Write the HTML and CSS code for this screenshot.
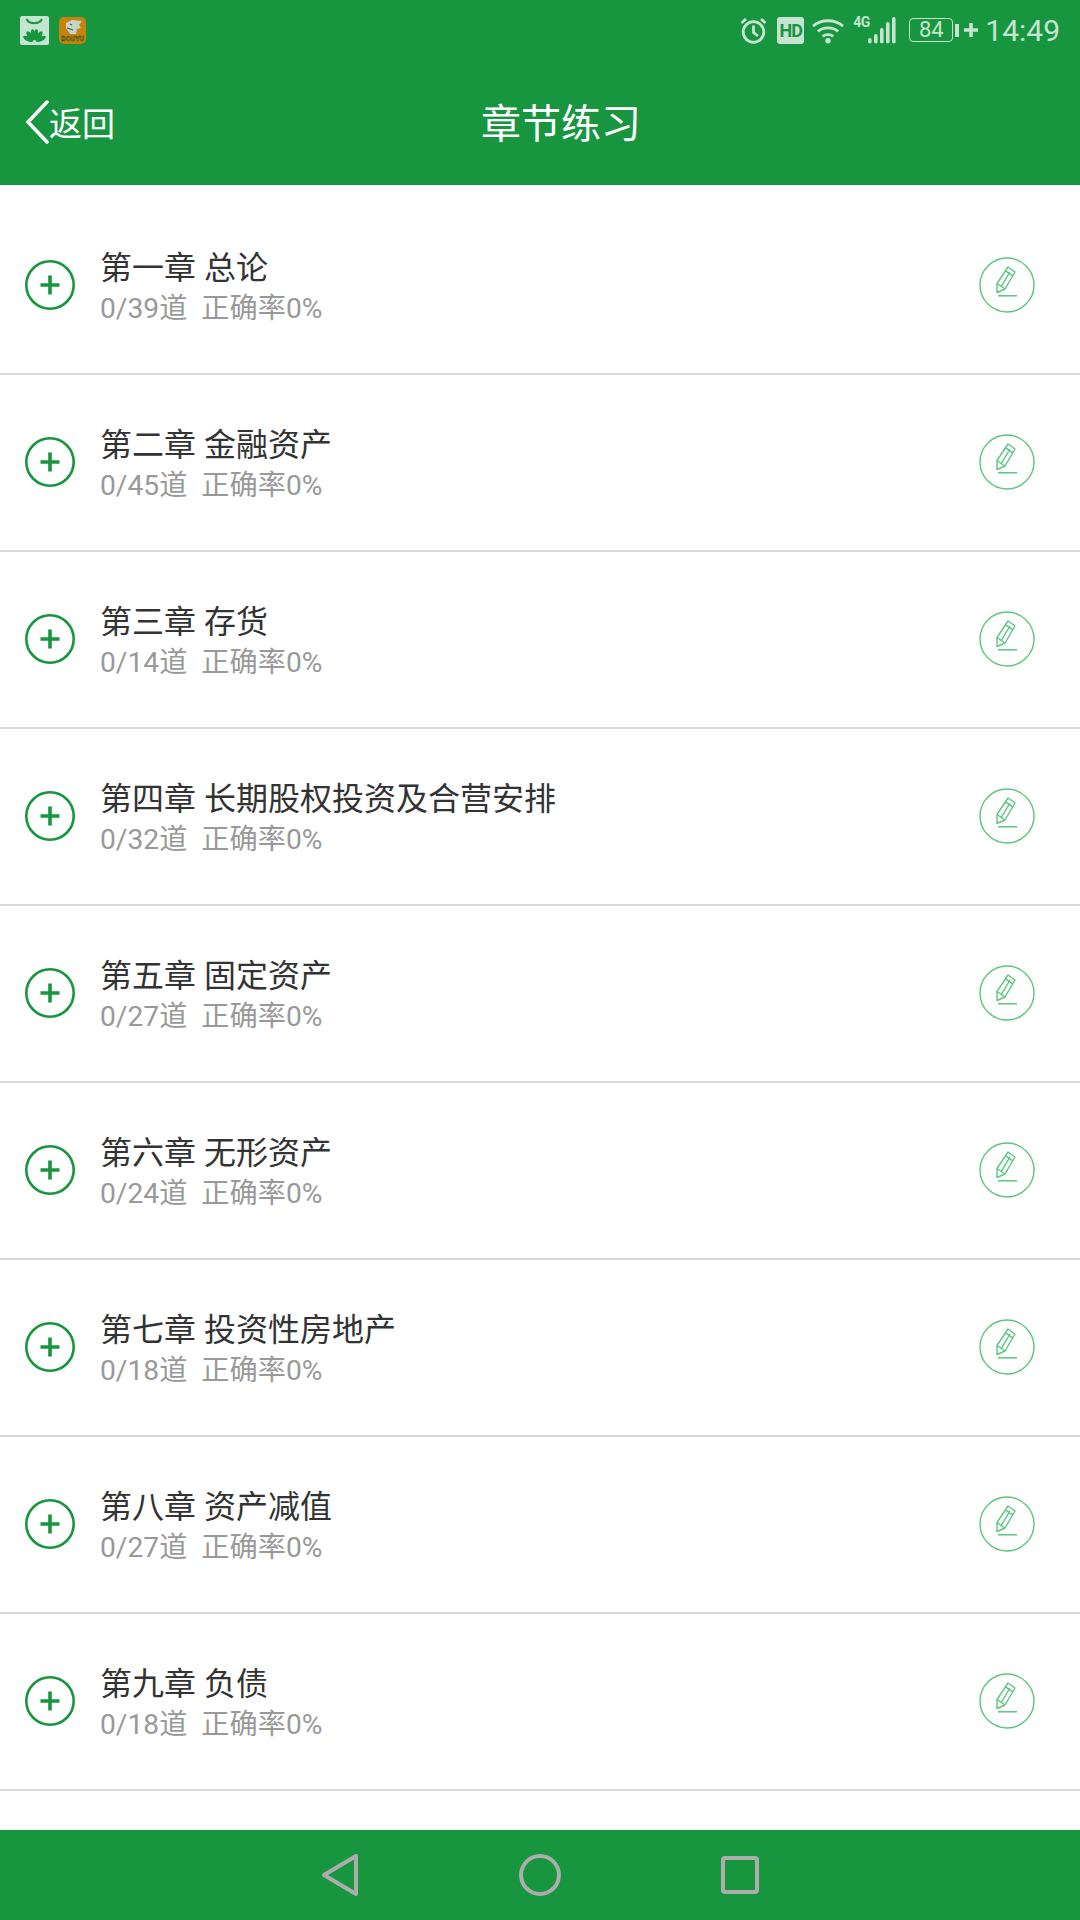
FILE: index.html
```html
<!DOCTYPE html>
<html lang="zh-CN">
<head>
    <meta charset="UTF-8">
    <meta name="viewport" content="width=device-width, initial-scale=1.0">
    <title>章节练习</title>
    <link rel="stylesheet" href="styles.css">
</head>
<body>

<svg class="defs">
    <symbol id="plus" viewBox="0 0 50 50">
        <circle cx="25" cy="25" r="23.700" fill="none" stroke="#17963f" stroke-width="2.600"/>
        <path d="M25 15.500V34.500M15.500 25H34.500" fill="none" stroke="#17963f" stroke-width="3.600"/>
    </symbol>
    <symbol id="pencil" viewBox="0 0 56 56">
        <circle cx="28" cy="28" r="27" fill="none" stroke="#5cc67f" stroke-width="1.400"/>
        <path d="M18 26.500L29 10L36 15L26 32L18 35.500ZM26.500 13.800L33.800 18.800M18 26.500L26 32M22.500 29.200L31 15" fill="none" stroke="#5cc67f" stroke-width="1.400" stroke-linejoin="round"/>
        <path d="M19 38.800H38" fill="none" stroke="#5cc67f" stroke-width="1.500"/>
    </symbol>
</svg>

<div class="phone">
    <div class="status-bar">
        <div class="status-left">
            <svg class="app-icon" width="29" height="29" viewBox="0 0 29 29">
                <rect width="29" height="29" rx="2" fill="#c5e5d0"/>
                <path d="M6.500 3C9 8.500 19.500 8.500 22 3" fill="none" stroke="#17963f" stroke-width="2"/>
                <g fill="#17963f">
                    <ellipse cx="14.500" cy="18.500" rx="2.300" ry="5.500" transform="rotate(-10 14.500 26)"/>
                    <ellipse cx="14.500" cy="18.500" rx="2.300" ry="5.500" transform="rotate(10 14.500 26)"/>
                    <ellipse cx="14.500" cy="18.500" rx="2.300" ry="5.500" transform="rotate(-36 14.500 26)"/>
                    <ellipse cx="14.500" cy="18.500" rx="2.300" ry="5.500" transform="rotate(36 14.500 26)"/>
                    <ellipse cx="14.500" cy="19" rx="2.300" ry="5.500" transform="rotate(-64 14.500 26)"/>
                    <ellipse cx="14.500" cy="19" rx="2.300" ry="5.500" transform="rotate(64 14.500 26)"/>
                </g>
            </svg>
            <svg class="app-icon" width="27" height="27" viewBox="0 0 27 27">
                <rect width="27" height="27" rx="5" fill="#c8820f"/>
                <path d="M7 6L13 3L23 4L20 8L22 11L18 12L17 17L11 17L7 11Z" fill="#c3d5c8"/>
                <path d="M8 11L14 13M11 7L13 8" stroke="#4a5a3a" stroke-width="1.200" fill="none"/>
                <text class="logo-text" x="13.500" y="23.500">DOUYU</text>
            </svg>
        </div>
        <div class="status-right">
            <svg width="27" height="27" viewBox="0 0 27 27" fill="none" stroke="#c5e5d0" stroke-width="2.800">
                <circle cx="13.500" cy="15" r="10.300"/>
                <path d="M13.500 8.500V15.500L18 19M1.500 6L6 2M25.500 6L21 2"/>
            </svg>
            <div class="hd">HD</div>
            <svg class="wifi" width="32" height="27" viewBox="0 0 33 27" fill="none" stroke="#c5e5d0" stroke-width="3">
                <path d="M1 9C9.500 1.500 23.500 1.500 32 9M6 14.500C12 9.500 21 9.500 27 14.500M11 19.500C14 17.200 19 17.200 22 19.500"/>
                <circle cx="16.500" cy="24" r="2.800" fill="#c5e5d0" stroke="none"/>
            </svg>
            <div class="signal">
                <span class="net">4G</span>
                <svg width="28" height="27" viewBox="0 0 28 27" fill="#c5e5d0">
                    <rect x="0" y="21" width="3.600" height="5.500" rx="1.700"/>
                    <rect x="6" y="17" width="3.600" height="9.500" rx="1.700"/>
                    <rect x="12" y="11" width="3.600" height="15.500" rx="1.700"/>
                    <rect x="18" y="5" width="3.600" height="21.500" rx="1.700"/>
                    <rect x="24" y="0" width="3.600" height="26.500" rx="1.700"/>
                </svg>
            </div>
            <div class="battery">
                <div class="battery-body">84</div>
                <div class="battery-tip"></div>
                <svg width="14" height="14" viewBox="0 0 14 14"><path d="M7 0V14M0 7H14" stroke="#c5e5d0" stroke-width="3.600"/></svg>
            </div>
            <div class="clock">14:49</div>
        </div>
    </div>

    <div class="title-bar">
        <div class="back">
            <svg width="24" height="44" viewBox="0 0 24 44"><path d="M22 2L3 22L22 42" fill="none" stroke="#fff" stroke-width="3.500" stroke-linecap="round"/></svg>
            <span>返回</span>
        </div>
        <div class="title">章节练习</div>
    </div>

    <div class="chapter-list" id="chapterList"></div>

    <div class="nav-bar">
        <svg width="38" height="44" viewBox="0 0 38 44"><path d="M3 22L35 3V41Z" fill="none" stroke="#adadad" stroke-width="4" stroke-linejoin="round"/></svg>
        <svg width="42" height="42" viewBox="0 0 42 42"><circle cx="21" cy="21" r="19" fill="none" stroke="#adadad" stroke-width="4"/></svg>
        <svg width="38" height="38" viewBox="0 0 38 38"><rect x="2" y="2" width="34" height="34" rx="2" fill="none" stroke="#adadad" stroke-width="4"/></svg>
    </div>
</div>

<script>
    const chapters = [
        ["第一章 总论", 39],
        ["第二章 金融资产", 45],
        ["第三章 存货", 14],
        ["第四章 长期股权投资及合营安排", 32],
        ["第五章 固定资产", 27],
        ["第六章 无形资产", 24],
        ["第七章 投资性房地产", 18],
        ["第八章 资产减值", 27],
        ["第九章 负债", 18]
    ];

    let list = document.getElementById("chapterList");
    chapters.forEach(chapter => {
        let row = document.createElement("div");
        row.className = "chapter";
        row.innerHTML = `
            <svg class="plus"><use href="#plus"/></svg>
            <div class="chapter-text">
                <div class="chapter-name">${chapter[0]}</div>
                <div class="chapter-stat">0/${chapter[1]}道&nbsp;&nbsp;正确率0%</div>
            </div>
            <svg class="pencil"><use href="#pencil"/></svg>
        `;
        list.appendChild(row);
    });
</script>

</body>
</html>
```

FILE: styles.css
```css
* {
    box-sizing: border-box;
}

body {
    margin: 0;
    background-color: #fff;
    font-family: "Roboto", "Noto Sans CJK SC", sans-serif;
}

.defs {
    display: none;
}

.phone {
    width: 1080px;
    height: 1920px;
    display: flex;
    flex-direction: column;
    overflow: hidden;
}

/* Status bar */
.status-bar {
    height: 60px;
    flex: none;
    background-color: #17963f;
    display: flex;
    justify-content: space-between;
    align-items: center;
    padding: 0 20px;
    color: #c5e5d0;
}

.status-left {
    display: flex;
    align-items: center;
    gap: 10px;
}

.logo-text {
    font-size: 7px;
    font-weight: 700;
    text-anchor: middle;
    fill: #e6d21a;
    stroke: #3a4a12;
    stroke-width: 0.6px;
}

.status-right {
    display: flex;
    align-items: center;
}

.hd {
    width: 27px;
    height: 27px;
    margin-left: 10px;
    border-radius: 3px;
    background-color: #c5e5d0;
    color: #17963f;
    font-size: 18px;
    font-weight: 700;
    line-height: 27px;
    text-align: center;
    letter-spacing: -1px;
}

.wifi {
    margin-left: 8px;
}

.signal {
    position: relative;
    width: 43px;
    height: 27px;
    margin-left: 9px;
    display: flex;
    justify-content: flex-end;
}

.net {
    position: absolute;
    left: 0;
    top: -3px;
    font-size: 14px;
    font-weight: 700;
    letter-spacing: -0.500px;
}

.battery {
    display: flex;
    align-items: center;
    margin-left: 13px;
}

.battery-body {
    width: 44px;
    height: 24px;
    border: 1px solid #c5e5d0;
    border-radius: 4px;
    font-size: 22px;
    line-height: 22px;
    text-align: center;
}

.battery-tip {
    width: 4px;
    height: 13px;
    margin: 0 5px 0 2px;
    background-color: #c5e5d0;
}

.clock {
    margin-left: 7px;
    font-size: 30px;
}

/* Title bar */
.title-bar {
    height: 125px;
    flex: none;
    background-color: #17963f;
    position: relative;
    display: flex;
    justify-content: center;
    align-items: center;
    color: #fff;
}

.back {
    position: absolute;
    left: 25px;
    top: 38px;
    display: flex;
    align-items: center;
    font-size: 33px;
}

.title {
    font-size: 40px;
    margin: -3px 0 0 42px;
}

/* Chapter list */
.chapter-list {
    flex: 1;
    padding-top: 13px;
    background-color: #fff;
}

.chapter {
    height: 177px;
    border-bottom: 2px solid #d9d9d9;
    display: flex;
    align-items: center;
    padding: 0 45px 0 25px;
}

.plus {
    width: 50px;
    height: 50px;
    flex: none;
    margin-top: -1px;
}

.chapter-text {
    flex: 1;
    margin-left: 25px;
    margin-top: 3px;
}

.chapter-name {
    font-size: 32px;
    line-height: 41px;
    margin-bottom: 1px;
    color: #333;
}

.chapter-stat {
    font-size: 28.200px;
    line-height: 37px;
    color: #999;
}

.pencil {
    width: 56px;
    height: 56px;
    flex: none;
    margin-top: -1px;
}

/* Navigation bar */
.nav-bar {
    height: 90px;
    flex: none;
    background-color: #17963f;
    display: flex;
    justify-content: center;
    align-items: center;
    gap: 160px;
}
```
